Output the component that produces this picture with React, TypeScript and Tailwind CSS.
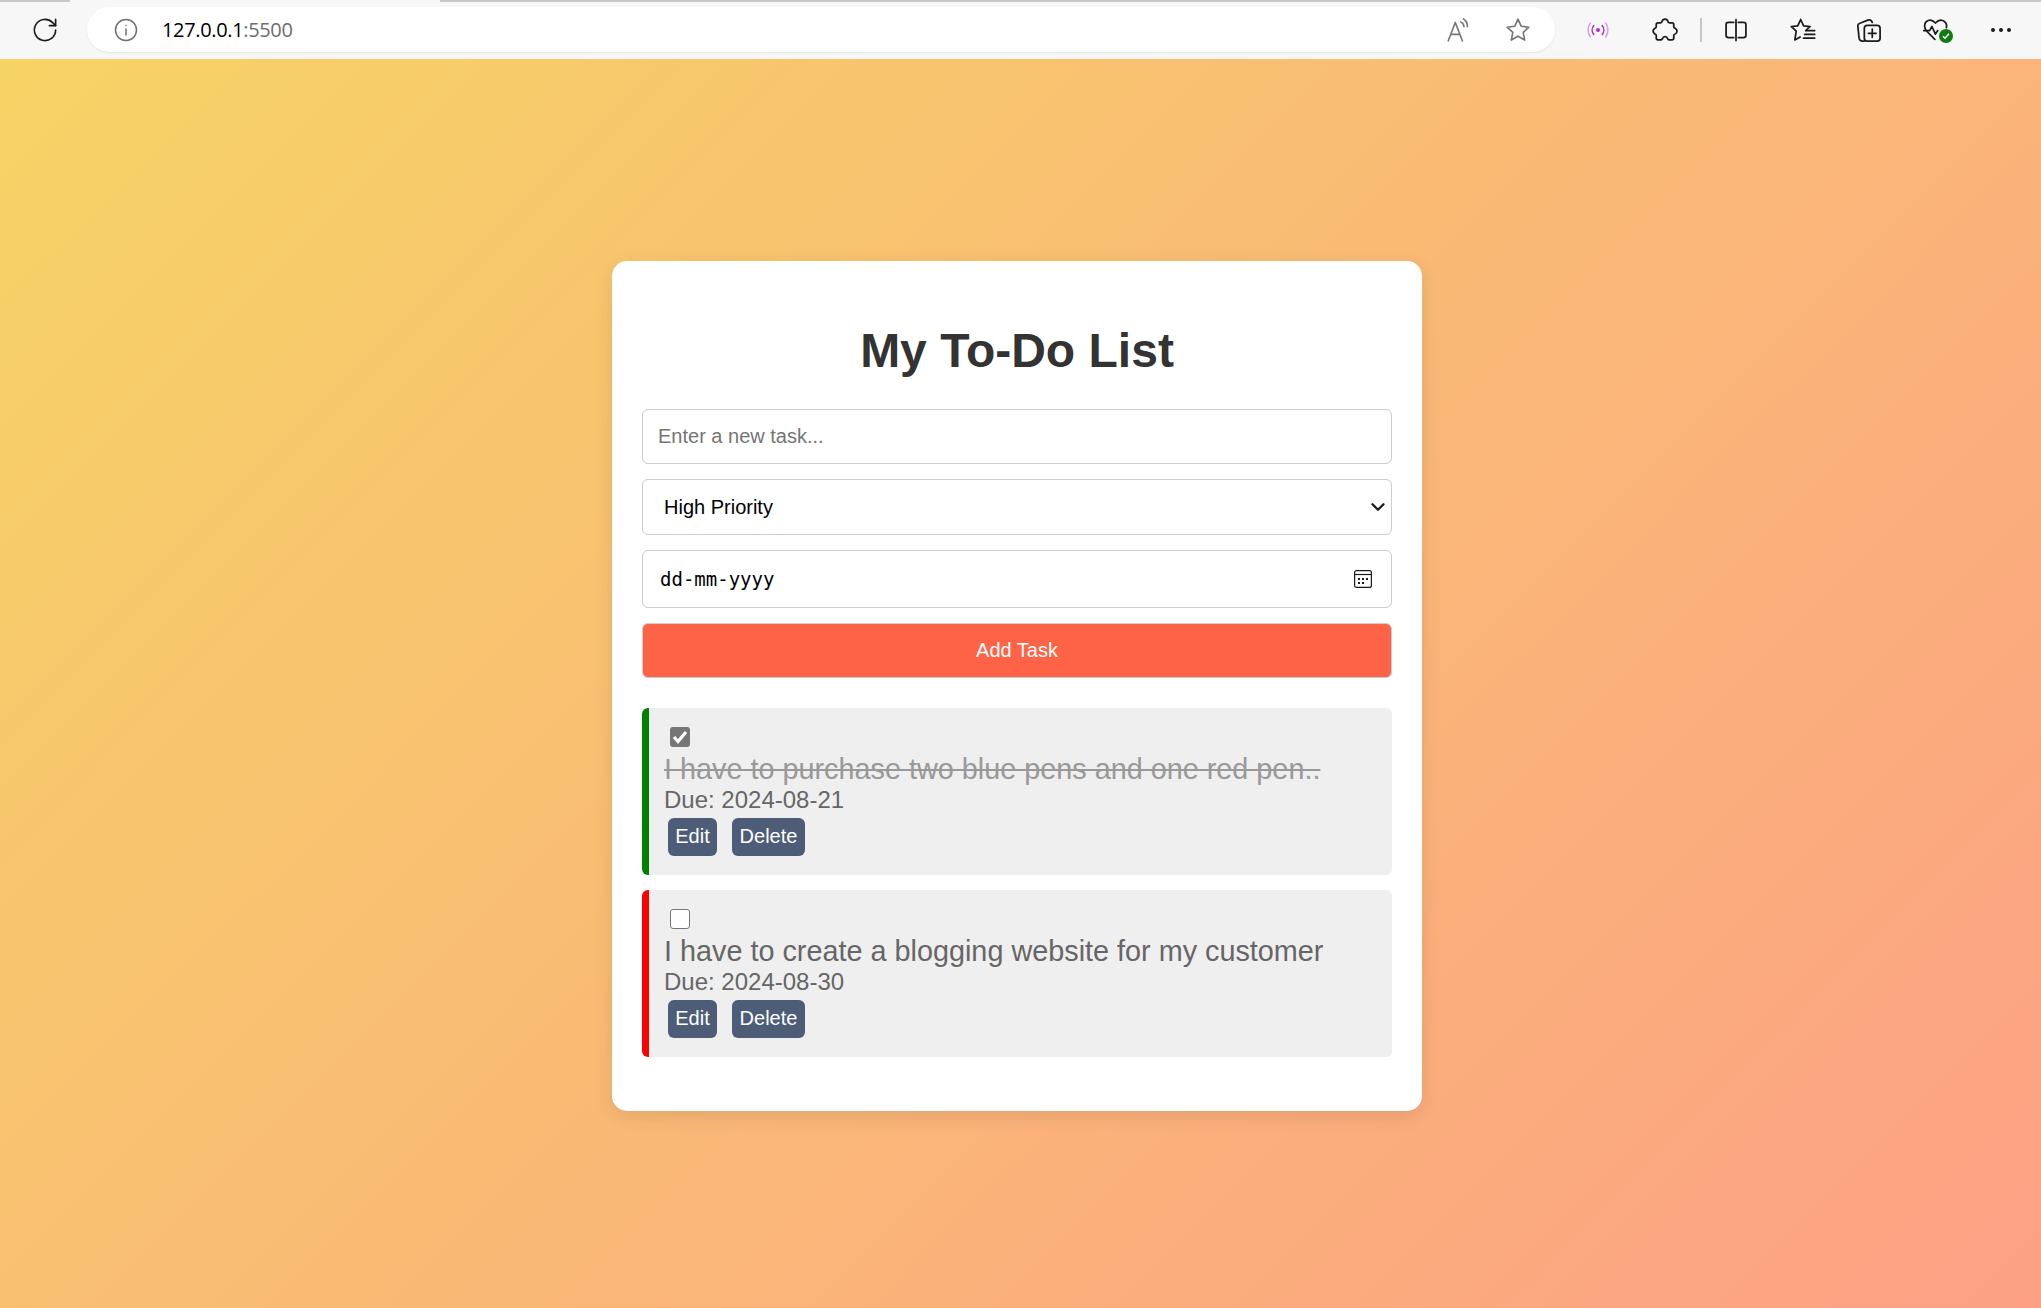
import React from 'react';
import { ChevronDown } from 'lucide-react';

const sans = 'font-["Liberation_Sans",Arial,sans-serif]';

const ToolbarIcon: React.FC<{ className: string; children: React.ReactNode }> = ({ className, children }) => (
  <svg viewBox="0 0 24 24" fill="none" stroke="currentColor" strokeWidth="1.5" strokeLinecap="round" strokeLinejoin="round" className={`shrink-0 ${className}`}>
    {children}
  </svg>
);

const BrowserBar: React.FC = () => (
  <div className="relative flex h-[59px] items-center bg-[#f7f7f7] text-[#1b1b1b]">
    <div className="absolute left-0 top-0 h-[2px] w-[70px] bg-[#c8c8c8]" />
    <div className="absolute left-[440px] right-0 top-0 h-[2px] bg-[#c8c8c8]" />
    <ToolbarIcon className="ml-[30px] h-[30px] w-[30px]">
      <path d="M20.5 12a8.500 8.500 0 1 1-2.600-6.100L20.500 8.500" strokeWidth="1.300" />
      <path d="M20.500 3.500v5h-5" strokeWidth="1.300" />
    </ToolbarIcon>
    <div className="ml-[27px] flex h-[45px] w-[1468px] shrink-0 items-center rounded-full bg-white shadow-[0_1px_2px_rgba(0,0,0,0.08)]">
      <ToolbarIcon className="ml-[27px] h-[24px] w-[24px] text-[#6e6e6e]">
        <circle cx="12" cy="12" r="10.5" />
        <path d="M12 11v6M12 7.400v.2" />
      </ToolbarIcon>
      <span className='ml-[24px] font-["Open_Sans",sans-serif] text-[20px] tracking-[-0.35px] text-black'>
        127.0.0.1<span className="text-[#6e6e6e]">:5500</span>
      </span>
      <ToolbarIcon className="ml-auto h-[26px] w-[26px] text-[#767676]">
        <path d="M3 22 9.500 5 16 22M5.300 16h8.400" />
        <path d="M14.500 4.500a5 5 0 0 1 3 4.500M17 1.800a8 8 0 0 1 3.700 7.200" />
      </ToolbarIcon>
      <ToolbarIcon className="ml-[34px] mr-[24px] h-[26px] w-[26px] text-[#767676]">
        <path d="m12 2 3 6.600 7 .8-5.200 4.800 1.400 7.100L12 17.700l-6.200 3.600 1.400-7.100L2 9.400l7-.8z" />
      </ToolbarIcon>
    </div>
    <ToolbarIcon className="ml-[31px] h-[24px] w-[24px] text-[#b02ec8]">
      <circle cx="12" cy="12" r="2" fill="currentColor" stroke="none" />
      <path d="M7.800 7.500a7 7 0 0 0 0 9M16.200 7.500a7 7 0 0 1 0 9" strokeWidth="1.500" />
      <path d="M4.400 5a11.500 11.500 0 0 0 0 14M19.600 5a11.500 11.500 0 0 1 0 14" strokeWidth="1.400" opacity="0.45" />
    </ToolbarIcon>
    <ToolbarIcon className="ml-[41px] h-[28px] w-[28px]">
      <path d="M9.500 4.500a2.600 2.600 0 0 1 5 0c0 .8.6 1.300 1.400 1.300H18a1.500 1.500 0 0 1 1.500 1.500v2c0 .8.6 1.200 1.200 1.300a2.600 2.600 0 0 1 0 4.800c-.7.2-1.200.7-1.200 1.400v2.100a1.500 1.500 0 0 1-1.500 1.500h-2.600c-.6 0-1-.4-1.200-1a2.300 2.300 0 0 0-4.400 0c-.2.6-.6 1-1.200 1H6a1.500 1.500 0 0 1-1.500-1.500v-2.200c0-.7-.5-1.200-1.200-1.400a2.600 2.600 0 0 1 0-4.700c.7-.2 1.200-.7 1.200-1.400V7.300A1.500 1.500 0 0 1 6 5.800h2.100c.8 0 1.400-.5 1.400-1.300z" />
    </ToolbarIcon>
    <div className="ml-[21px] h-[24px] w-[1.500px] shrink-0 bg-[#c6c6c6]" />
    <ToolbarIcon className="ml-[20px] h-[28px] w-[28px]">
      <path d="M10 5.500H5.500a2 2 0 0 0-2 2v9a2 2 0 0 0 2 2H10M14 5.500h4.500a2 2 0 0 1 2 2v9a2 2 0 0 1-2 2H14M12 3v18" />
    </ToolbarIcon>
    <ToolbarIcon className="ml-[39px] h-[28px] w-[28px]">
      <path d="m10 3 2.500 5.400 5.500.7-3.700 3.400M10 3 7.500 8.400 2 9.100l4.200 3.900L5 20.500l4.500-2.500" />
      <path d="M15 12.500h7M13.500 15.800h8.500M12.500 19h9.500" />
    </ToolbarIcon>
    <ToolbarIcon className="ml-[38px] h-[28px] w-[28px]">
      <path d="M8 21.500H6.500a3 3 0 0 1-3-2.500L2.500 9.500A3 3 0 0 1 4.800 6L11 3.500c1.800-.6 3.200.2 3.800 2" />
      <rect x="8" y="8" width="13.500" height="13.500" rx="2.500" />
      <path d="M14.800 11.300v7M11.500 14.800h6.600" />
    </ToolbarIcon>
    <div className="relative ml-[39px] h-[28px] w-[28px] shrink-0">
      <ToolbarIcon className="h-[28px] w-[28px]">
        <path d="M11 20 4.500 13.500C1.500 10.500 1.600 6.500 3.800 4.700 6 3 9 3.300 11.500 6c2.500-2.700 5.500-3 7.700-1.300 1.600 1.300 2.200 3.400 1.700 5.300" />
        <path d="M1.500 12.500h5l2-3.500 3 6.500 2-3" />
      </ToolbarIcon>
      <div className="absolute right-[-3px] top-[13px] flex h-[14px] w-[14px] items-center justify-center rounded-full bg-[#107c10]">
        <svg viewBox="0 0 10 10" className="h-[10px] w-[10px]" fill="none" stroke="white" strokeWidth="1.600">
          <path d="m2 5.200 2 2 4-4.400" />
        </svg>
      </div>
    </div>
    <div className="ml-[41px] flex shrink-0 gap-[4px]">
      <span className="h-[4px] w-[4px] rounded-full bg-[#1b1b1b]" />
      <span className="h-[4px] w-[4px] rounded-full bg-[#1b1b1b]" />
      <span className="h-[4px] w-[4px] rounded-full bg-[#1b1b1b]" />
    </div>
  </div>
);

const TaskItem: React.FC<{ text: string; due: string; done?: boolean; bar: string }> = ({ text, due, done, bar }) => (
  <li className={`flex h-[167px] flex-col rounded-[6px] border-l-[7px] bg-[#efefef] pl-[15px] ${bar}`}>
    <span
      className={`ml-[6px] mt-[19px] flex h-[20px] w-[20px] items-center justify-center rounded-[3px] ${
        done ? 'bg-[#767676]' : 'border border-[#767676] bg-white'
      }`}
    >
      {done && (
        <svg viewBox="0 0 20 20" className="h-[20px] w-[20px]" fill="none" stroke="white" strokeWidth="3.200">
          <path d="m4 10 4 4.500 8-9.500" />
        </svg>
      )}
    </span>
    <p className={`mt-[6px] text-[28.800px] leading-[32px] ${done ? 'text-[#999999] line-through' : 'text-[#666666]'}`}>{text}</p>
    <p className="mt-[1px] text-[24px] leading-[28px] text-[#666666]">{due}</p>
    <div className="ml-[4px] mt-[4px] flex gap-[15px]">
      <button className="h-[38px] w-[49px] rounded-[6px] bg-[#4e5d77] pb-[2px] text-[20px] text-white">Edit</button>
      <button className="h-[38px] w-[73px] rounded-[6px] bg-[#4e5d77] pb-[2px] text-[20px] text-white">Delete</button>
    </div>
  </li>
);

export default function App() {
  return (
    <div className={`flex min-h-screen flex-col ${sans}`}>
      <BrowserBar />
      <main className="flex flex-1 justify-center bg-[linear-gradient(135deg,#f6d365,#fda085)] pb-[197px] pr-[7px] pt-[202px]">
        <div className="h-[850px] w-[810px] rounded-[15px] bg-white px-[30px] shadow-[0_5px_19px_rgba(0,0,0,0.1)]">
          <h1 className="mt-[61px] text-center text-[48px] font-bold leading-[58px] text-[#333333]">My To-Do List</h1>
          <input
            placeholder="Enter a new task..."
            className="mt-[29px] block h-[55px] w-full rounded-[6px] border border-[#cccccc] px-[15px] text-[20px] placeholder:text-[#757575]"
          />
          <div className="relative mt-[15px]">
            <select className="block h-[56px] w-full appearance-none rounded-[6px] border border-[#cccccc] bg-white pl-[21px] text-[20px] text-black">
              <option>High Priority</option>
              <option>Medium Priority</option>
              <option>Low Priority</option>
            </select>
            <ChevronDown className="absolute right-[3px] top-[17px] h-[22px] w-[22px] text-[#1b1b1b]" strokeWidth={2.5} />
          </div>
          <div className="mt-[15px] flex h-[58px] items-center justify-between rounded-[6px] border border-[#cccccc] pl-[17px] pr-[19px]">
            <span className='font-["DejaVu_Sans_Mono",monospace] text-[19px] text-black'>dd-mm-yyyy</span>
            <svg viewBox="0 0 18 18" className="h-[18px] w-[18px]" fill="none" stroke="#1b1b1b" strokeWidth="1.200">
              <rect x="0.600" y="0.600" width="16.800" height="16.800" rx="2" />
              <path d="M0.600 4.500h16.800" />
              <path d="M4 8h2v2H4zM8 8h2v2H8zM12 8h2v2h-2zM4 12h2v2H4zM8 12h2v2H8z" fill="#1b1b1b" stroke="none" />
            </svg>
          </div>
          <button className="mt-[15px] block h-[55px] w-full rounded-[6px] border border-[#cccccc] bg-[#ff6347] pb-[2px] text-[20px] text-white">Add Task</button>
          <ul className="mt-[30px] flex flex-col gap-[15px]">
            <TaskItem text="I have to purchase two blue pens and one red pen.." due="Due: 2024-08-21" done bar="border-[#008000]" />
            <TaskItem text="I have to create a blogging website for my customer" due="Due: 2024-08-30" bar="border-[#ff0000]" />
          </ul>
        </div>
      </main>
    </div>
  );
}
